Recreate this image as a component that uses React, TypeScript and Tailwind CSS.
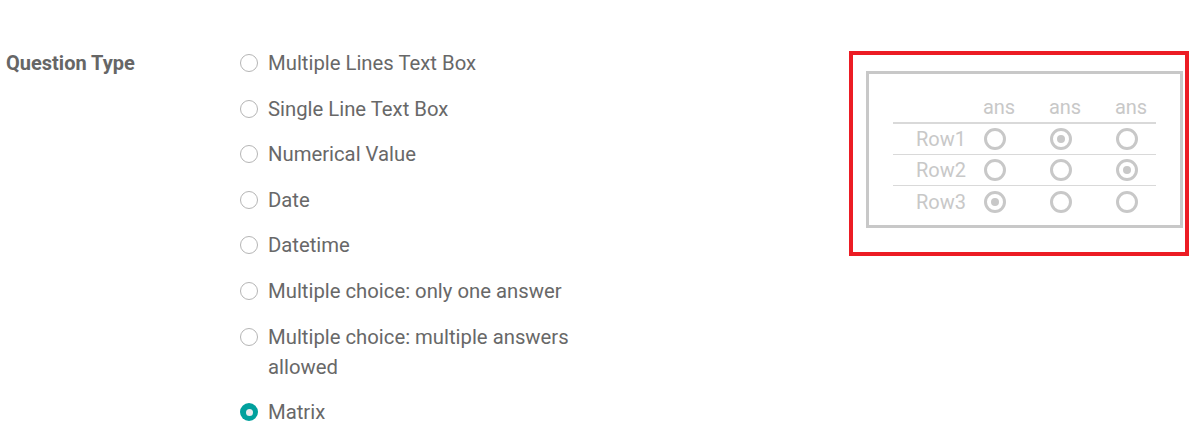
import React from "react";

const options = [
  "Multiple Lines Text Box",
  "Single Line Text Box",
  "Numerical Value",
  "Date",
  "Datetime",
  "Multiple choice: only one answer",
  "Multiple choice: multiple answers allowed",
  "Matrix",
];

function Radio({ checked }: { checked?: boolean }) {
  if (checked) {
    return (
      <span className="mt-[6px] flex h-[18px] w-[18px] shrink-0 items-center justify-center rounded-full bg-[#00a09d]">
        <span className="h-[7px] w-[7px] rounded-full bg-[#e9ecef]" />
      </span>
    );
  }
  return <span className="mt-[6px] block h-[18px] w-[18px] shrink-0 rounded-full border border-[#b5b5b5] bg-white" />;
}

function PRadio({ checked }: { checked?: boolean }) {
  return (
    <span className="flex h-[22px] w-[22px] items-center justify-center rounded-full border-[3px] border-[#c8c8c8]">
      {checked && <span className="h-[8px] w-[8px] rounded-full bg-[#c8c8c8]" />}
    </span>
  );
}

const matrix = [
  ["Row1", [false, true, false]],
  ["Row2", [false, false, true]],
  ["Row3", [true, false, false]],
] as const;

export default function App() {
  return (
    <div className="h-[443px] w-[1191px] bg-white font-['Roboto',sans-serif]">
      <div className="flex pt-[48px]">
        <div className="w-[234px] shrink-0 pl-[6px] text-[20px] font-bold leading-[30px] text-[#666666]">
          Question Type
        </div>
        <div className="flex w-[340px] flex-col gap-[15.6px] pl-[6px]">
          {options.map((o, i) => (
            <label key={o} className="flex items-start gap-[10px]">
              <Radio checked={i === options.length - 1} />
              <span className="text-[20.3px] leading-[30px] text-[#686868]">{o}</span>
            </label>
          ))}
        </div>
        <div className="ml-[275px] mt-[3px] h-[205px] w-[340px] border-4 border-[#ec1c24] pl-[13px] pt-[16px]">
          <div className="h-[157px] w-[317px] border-[3px] border-[#c8c8c8] pl-[24px] pt-[20px]">
            <div className="w-[263px] text-[20px] text-[#c8c8c8]">
              <div className="h-[30px] border-b-2 border-[#d9d9d9] pb-[2px]">
                <div className="grid h-full w-[271px] grid-cols-[73px_66px_66px_66px] items-center">
                  <span />
                  <span className="text-center leading-none">ans</span>
                  <span className="text-center leading-none">ans</span>
                  <span className="text-center leading-none">ans</span>
                </div>
              </div>
              {matrix.map(([label, vals], ri) => (
                <div key={label} className={`h-[31px] ${ri < 2 ? "border-b border-[#d9d9d9]" : ""}`}>
                  <div className="grid h-full w-[271px] grid-cols-[73px_66px_66px_66px] items-center">
                    <span className="text-right leading-none">{label}</span>
                    {vals.map((v, ci) => (
                      <span key={ci} className="flex pl-[18px]">
                        <PRadio checked={v} />
                      </span>
                    ))}
                  </div>
                </div>
              ))}
            </div>
          </div>
        </div>
      </div>
    </div>
  );
}
